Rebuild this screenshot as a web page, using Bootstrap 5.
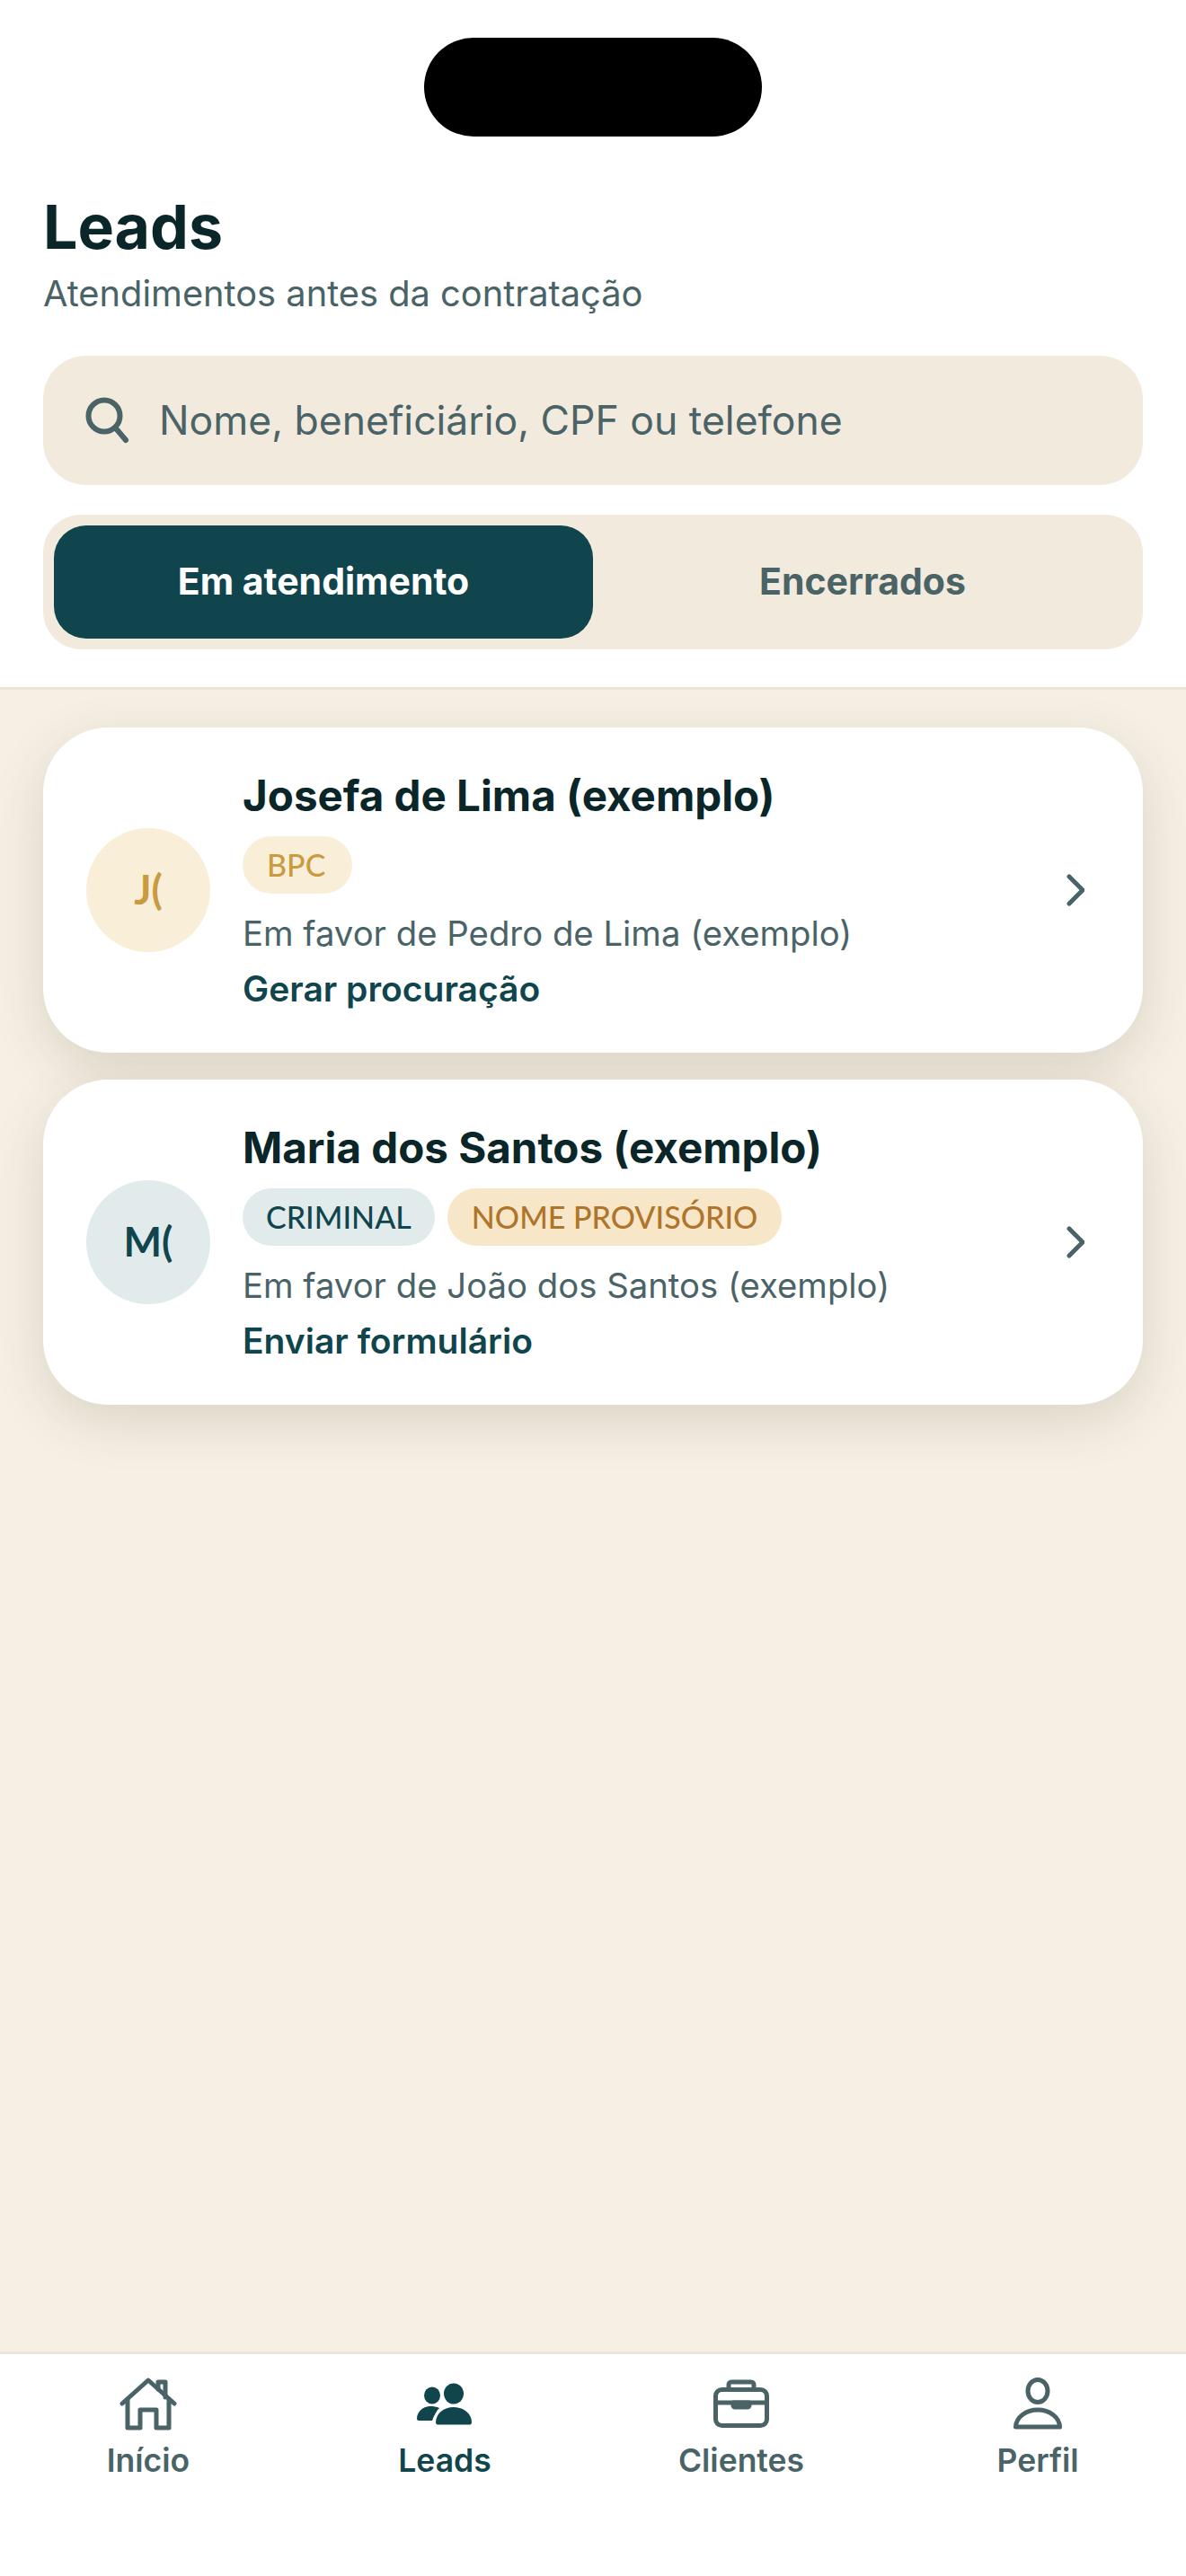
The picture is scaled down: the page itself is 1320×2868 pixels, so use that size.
<!DOCTYPE html>
<html lang="pt-BR">
<head>
  <meta charset="UTF-8" />
  <meta name="viewport" content="width=device-width, initial-scale=1.0" />
  <title>Leads</title>
  <link href="https://cdn.jsdelivr.net/npm/bootstrap@5.3.3/dist/css/bootstrap.min.css" rel="stylesheet">
  <style>
    html, body { height: 100%; }
    body { font-family: "Inter", "Liberation Sans", sans-serif; background: #f6efe4; color: #0a2629; }
    .app-shell { height: 2868px; }
    .top-area { background: #fff; border-bottom: 3px solid #ebe4d8; padding: 42px 48px 42px; height: 768px; flex: none; }
    .island { width: 376px; height: 110px; background: #000; border-radius: 55px; margin: 0 auto 60px; }
    .page-title { font-size: 68px; font-weight: 700; line-height: 80px; margin: 0; color: #0a2629; }
    .page-sub { font-size: 39.8px; line-height: 48px; color: #4a6367; margin: 11px 0 45px; }
    .search-box { height: 144px; background: #f2eadd; border-radius: 48px; padding: 0 36px 0 46px; gap: 33px; margin-bottom: 33px; }
    .search-box input { border: 0; outline: 0; background: transparent; font-size: 44.5px; color: #4a6367; width: 100%; padding: 0; }
    .search-box input::placeholder { color: #4a6367; opacity: 1; }
    .segment { height: 150px; background: #f2eadd; border-radius: 42px; padding: 12px; }
    .seg-item { flex: 1 1 0; font-size: 41px; font-weight: 700; color: #4a6367; border-radius: 36px; }
    .seg-item.on { background: #10454d; color: #fff; }
    .lead-list { padding: 42px 48px 0; gap: 30px; }
    .lead-card { background: #fff; border: 0; border-radius: 72px; height: 362px; padding: 0 65px 0 48px; box-shadow: 0 18px 60px rgba(60, 60, 30, .14); }
    .avatar { width: 138px; height: 138px; border-radius: 50%; font-family: "Lato", sans-serif; font-size: 45px; font-weight: 700; flex: none; margin-right: 36px; }
    .av-gold { background: #f9efd9; color: #c99a3e; }
    .av-teal { background: #e1ebec; color: #10454d; }
    .lead-name { font-size: 47.5px; font-weight: 700; line-height: 58px; color: #0a2629; margin-bottom: 16px; }
    .tag { font-family: "Lato", sans-serif; font-size: 34px; font-weight: 500; line-height: 64px; height: 64px; padding: 0 27px; border-radius: 32px; }
    .tag-row { gap: 14px; }
    .tag-gold { background: #f9efd9; color: #c99a3e; padding: 0 30px 0 27px; }
    .tag-teal { background: #e1ebec; color: #10454d; padding: 0 26px; }
    .tag-orange { background: #f7e7c8; color: #b0742a; }
    .lead-for { font-size: 38.3px; line-height: 48px; color: #4a6367; margin-top: 20px; }
    .lead-action { font-size: 39px; font-weight: 600; line-height: 48px; color: #10454d; margin-top: 14px; }
    .tab-bar { background: #fff; border-top: 3px solid #ebe4d8; height: 250px; flex: none; padding-top: 26px; }
    .tab-item { flex: 1 1 0; font-size: 35.5px; font-weight: 600; line-height: 44px; color: #4a6367; gap: 11px; }
    .tab-item.on { color: #10454d; }
  </style>
</head>
<body>
<div class="app-shell d-flex flex-column">

  <!-- Header -->
  <div class="top-area">
    <div class="island"></div>
    <h1 class="page-title">Leads</h1>
    <p class="page-sub">Atendimentos antes da contratação</p>

    <div class="search-box d-flex align-items-center">
      <svg width="50" height="56" viewBox="0 0 50 56" fill="none" stroke="#4a6367" stroke-width="6" stroke-linecap="round" class="flex-shrink-0"><circle cx="22" cy="23" r="17.5"/><path d="M35 37l11 13"/></svg>
      <input type="text" placeholder="Nome, beneficiário, CPF ou telefone">
    </div>

    <div class="segment d-flex">
      <div class="seg-item on d-flex align-items-center justify-content-center">Em atendimento</div>
      <div class="seg-item d-flex align-items-center justify-content-center">Encerrados</div>
    </div>
  </div>

  <!-- Leads -->
  <div class="lead-list flex-grow-1 d-flex flex-column">
    <div class="lead-card d-flex align-items-center">
      <div class="avatar av-gold d-flex align-items-center justify-content-center">J(</div>
      <div class="flex-grow-1">
        <div class="lead-name">Josefa de Lima (exemplo)</div>
        <div class="tag-row d-flex"><span class="tag tag-gold">BPC</span></div>
        <div class="lead-for">Em favor de Pedro de Lima (exemplo)</div>
        <div class="lead-action">Gerar procuração</div>
      </div>
      <svg width="20" height="36" viewBox="0 0 20 36" fill="none" stroke="#4a6367" stroke-width="5" stroke-linecap="round" stroke-linejoin="round"><path d="M3 3l15 15L3 33"/></svg>
    </div>

    <div class="lead-card d-flex align-items-center">
      <div class="avatar av-teal d-flex align-items-center justify-content-center">M(</div>
      <div class="flex-grow-1">
        <div class="lead-name">Maria dos Santos (exemplo)</div>
        <div class="tag-row d-flex"><span class="tag tag-teal">CRIMINAL</span><span class="tag tag-orange">NOME PROVISÓRIO</span></div>
        <div class="lead-for">Em favor de João dos Santos (exemplo)</div>
        <div class="lead-action">Enviar formulário</div>
      </div>
      <svg width="20" height="36" viewBox="0 0 20 36" fill="none" stroke="#4a6367" stroke-width="5" stroke-linecap="round" stroke-linejoin="round"><path d="M3 3l15 15L3 33"/></svg>
    </div>
  </div>

  <!-- Bottom tabs -->
  <div class="tab-bar d-flex align-items-start">
    <div class="tab-item d-flex flex-column align-items-center">
      <svg width="70" height="60" viewBox="0 0 70 60" fill="none" stroke="#4a6367" stroke-width="5" stroke-linecap="round" stroke-linejoin="round"><path d="M6 29L35 3l29 26"/><path d="M12 24v32h14V36h18v20h14V24"/><path d="M46 13V5h8v17"/></svg>
      <span>Início</span>
    </div>
    <div class="tab-item on d-flex flex-column align-items-center">
      <svg width="70" height="60" viewBox="0 0 70 60" fill="#10454d"><ellipse cx="45" cy="18" rx="11" ry="11.5"/><ellipse cx="21" cy="20" rx="9" ry="9.5"/><path d="M25 50c0-10 9-17 20-17s20 7 20 17c0 1.500-1 2.500-2 2.500H27c-1 0-2-1-2-2.500z"/><path d="M4 46c0-8 7-14 15-14 3 0 7 .5 10 2-3 3-6 8-8 14H6c-1 0-2-1-2-2z"/></svg>
      <span>Leads</span>
    </div>
    <div class="tab-item d-flex flex-column align-items-center">
      <svg width="70" height="60" viewBox="0 0 70 60" fill="none" stroke="#4a6367" stroke-width="5" stroke-linecap="round" stroke-linejoin="round"><rect x="6.500" y="13.500" width="57" height="40" rx="7"/><path d="M21 13V8a3 3 0 0 1 3-3h22a3 3 0 0 1 3 3v5"/><path d="M6.500 28h57"/><path d="M26 28h18v3a2 2 0 0 1-2 2H28a2 2 0 0 1-2-2z" fill="#4a6367"/></svg>
      <span>Clientes</span>
    </div>
    <div class="tab-item d-flex flex-column align-items-center">
      <svg width="70" height="60" viewBox="0 0 70 60" fill="none" stroke="#4a6367" stroke-width="5" stroke-linecap="round" stroke-linejoin="round"><ellipse cx="35" cy="15" rx="11" ry="12.500"/><path d="M10.500 55C11 44 22 36 35 36s24 8 24.500 19z"/></svg>
      <span>Perfil</span>
    </div>
  </div>

</div>
<script src="https://cdn.jsdelivr.net/npm/bootstrap@5.3.3/dist/js/bootstrap.bundle.min.js"></script>
</body>
</html>
